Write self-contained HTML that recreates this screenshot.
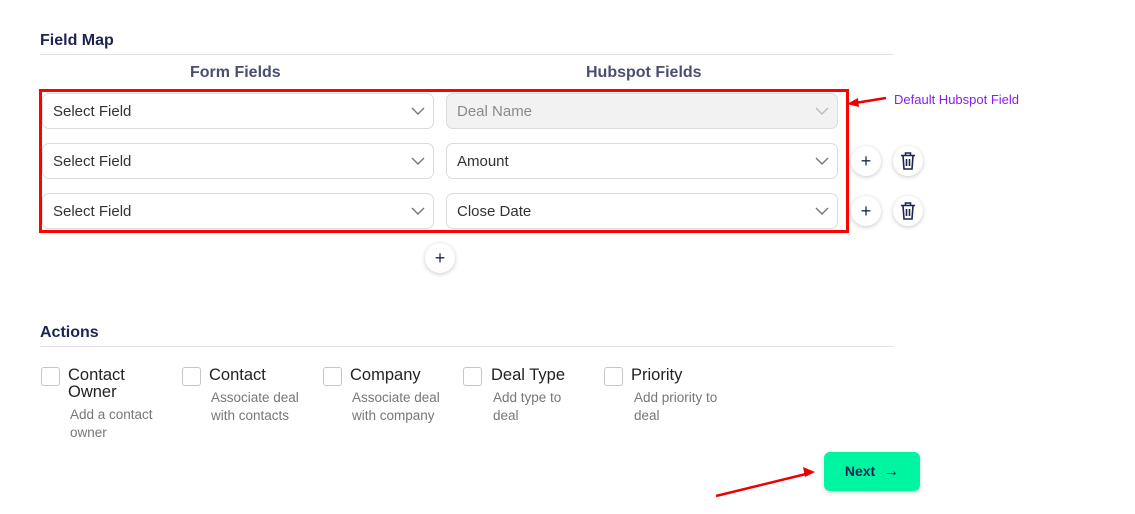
<!DOCTYPE html>
<html><head><style>
body{margin:0;width:1135px;height:514px;background:#fff;font-family:"Liberation Sans",sans-serif;position:relative;overflow:hidden}
.a{position:absolute}
.h{font-weight:bold;font-size:16px;color:#1b2550}
.line{height:1px;background:#e2e2e6}
.sel{position:absolute;height:36px;border:1px solid #dcdcdc;border-radius:7px;box-sizing:border-box;font-size:15px;color:#333;line-height:36px;padding-left:10px;background:#fff}
.sel svg{position:absolute;right:8px;top:12px}
.dis{background:#f2f2f2;color:#8a8a8a}
.btn{position:absolute;width:30px;height:30px;border-radius:50%;background:#fff;box-shadow:0 1px 4px rgba(0,0,0,.22);text-align:center;line-height:30px;font-size:18px;color:#1b2550}
.cb{position:absolute;width:17px;height:17px;border:1.5px solid #c4c6cc;border-radius:3px}
.lab{position:absolute;font-size:16.5px;color:#222;line-height:17px}
.sub{position:absolute;font-size:13.5px;color:#777;line-height:18px}
</style></head><body>
<div class="a h" style="left:40px;top:32px">Field Map</div>
<div class="a line" style="left:40px;top:54px;width:853px"></div>
<div class="a h" style="left:190px;top:64px;color:#4a4f6e;font-size:16px">Form Fields</div>
<div class="a h" style="left:586px;top:64px;color:#4a4f6e;font-size:16px">Hubspot Fields</div>

<div class="sel" style="left:42px;top:93px;width:392px">Select Field<svg width="14" height="10"><path d="M1 2l6 6 6-6" stroke="#777" fill="none" stroke-width="1.4"/></svg></div>
<div class="sel" style="left:42px;top:143px;width:392px">Select Field<svg width="14" height="10"><path d="M1 2l6 6 6-6" stroke="#777" fill="none" stroke-width="1.4"/></svg></div>
<div class="sel" style="left:42px;top:193px;width:392px">Select Field<svg width="14" height="10"><path d="M1 2l6 6 6-6" stroke="#777" fill="none" stroke-width="1.4"/></svg></div>
<div class="sel dis" style="left:446px;top:93px;width:392px">Deal Name<svg width="14" height="10"><path d="M1 2l6 6 6-6" stroke="#bbb" fill="none" stroke-width="1.4"/></svg></div>
<div class="sel" style="left:446px;top:143px;width:392px">Amount<svg width="14" height="10"><path d="M1 2l6 6 6-6" stroke="#777" fill="none" stroke-width="1.4"/></svg></div>
<div class="sel" style="left:446px;top:193px;width:392px">Close Date<svg width="14" height="10"><path d="M1 2l6 6 6-6" stroke="#777" fill="none" stroke-width="1.4"/></svg></div>

<div class="a" style="left:39px;top:89px;width:804px;height:138px;border:3px solid #f00"></div>

<div class="btn" style="left:851px;top:146px">+</div>
<div class="btn" style="left:851px;top:196px">+</div>
<div class="btn" style="left:893px;top:146px"><svg width="18" height="20" style="margin-top:5px"><path d="M2 4.5h14M6.5 4.5V2h5v2.5M4 4.5l1 13.5h8l1-13.5z M7.5 8v7M10.5 8v7" stroke="#1b2550" fill="none" stroke-width="1.6"/></svg></div>
<div class="btn" style="left:893px;top:196px"><svg width="18" height="20" style="margin-top:5px"><path d="M2 4.5h14M6.5 4.5V2h5v2.5M4 4.5l1 13.5h8l1-13.5z M7.5 8v7M10.5 8v7" stroke="#1b2550" fill="none" stroke-width="1.6"/></svg></div>
<div class="btn" style="left:425px;top:243px">+</div>

<svg class="a" style="left:0;top:0" width="1135" height="514"><path d="M886 98L855 103" stroke="#e00" stroke-width="2.5"/><path d="M847 104l11-6 1 9z" fill="#e00"/><path d="M716 496L806 474" stroke="#e00" stroke-width="2.5"/><path d="M815 472l-12-5 2 10z" fill="#e00"/></svg>
<div class="a" style="left:894px;top:92px;font-size:13px;color:#8a1cf0">Default Hubspot Field</div>

<div class="a h" style="left:40px;top:324px">Actions</div>
<div class="a line" style="left:40px;top:346px;width:853px"></div>

<div class="cb" style="left:41px;top:367px"></div>
<div class="lab" style="left:68px;top:367px">Contact<br>Owner</div>
<div class="sub" style="left:70px;top:406px">Add a contact<br>owner</div>
<div class="cb" style="left:182px;top:367px"></div>
<div class="lab" style="left:209px;top:367px">Contact</div>
<div class="sub" style="left:211px;top:389px">Associate deal<br>with contacts</div>
<div class="cb" style="left:323px;top:367px"></div>
<div class="lab" style="left:350px;top:367px">Company</div>
<div class="sub" style="left:352px;top:389px">Associate deal<br>with company</div>
<div class="cb" style="left:463px;top:367px"></div>
<div class="lab" style="left:491px;top:367px">Deal Type</div>
<div class="sub" style="left:493px;top:389px">Add type to<br>deal</div>
<div class="cb" style="left:604px;top:367px"></div>
<div class="lab" style="left:631px;top:367px">Priority</div>
<div class="sub" style="left:634px;top:389px">Add priority to<br>deal</div>

<div class="a" style="left:824px;top:452px;width:96px;height:39px;background:#00f5a0;border-radius:6px;box-shadow:0 2px 4px rgba(0,0,0,.15);font-weight:bold;font-size:14px;color:#1b2550;line-height:39px;text-align:center">Next <span style="font-weight:normal;font-size:16px;margin-left:4px">→</span></div>
</body></html>
